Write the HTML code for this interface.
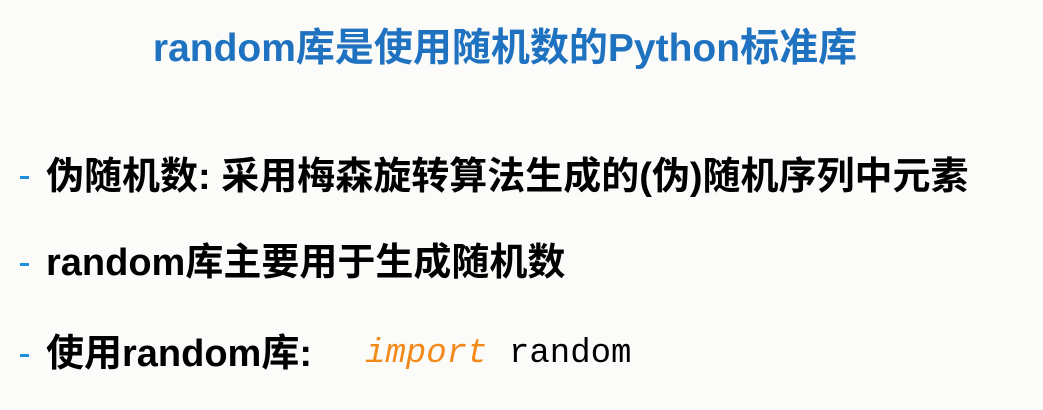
<!DOCTYPE html>
<html><head><meta charset="utf-8"><style>
body{margin:0;width:1043px;height:410px;background:#fbfbf9;overflow:hidden;position:relative;font-family:"Liberation Sans","Noto Sans CJK SC",sans-serif;}
.t{position:absolute;left:0;width:1010px;top:25px;text-align:center;color:#1f72c0;font-weight:bold;font-size:39px;line-height:48px;}
.l{position:absolute;left:46px;font-weight:bold;font-size:38px;line-height:44px;color:#000;white-space:nowrap;}
.d{position:absolute;left:20px;width:9px;height:3px;background:#1f8fe0;}
.c{font-family:"Liberation Mono",monospace;font-weight:normal;font-size:34px;position:absolute;top:0;}
</style></head><body>
<div class="t">random库是使用随机数的Python标准库</div>
<div class="d" style="top:176px"></div>
<div class="l" style="top:155px">伪随机数: 采用梅森旋转算法生成的(伪)随机序列中元素</div>
<div class="d" style="top:263px"></div>
<div class="l" style="top:241px">random库主要用于生成随机数</div>
<div class="d" style="top:354px"></div>
<div class="l" style="top:332px">使用random库:</div>
<div class="l" style="top:332px;left:0"><span class="c" style="left:365px;color:#f28a1a;font-style:italic">import</span><span class="c" style="left:509px">random</span></div>
</body></html>
